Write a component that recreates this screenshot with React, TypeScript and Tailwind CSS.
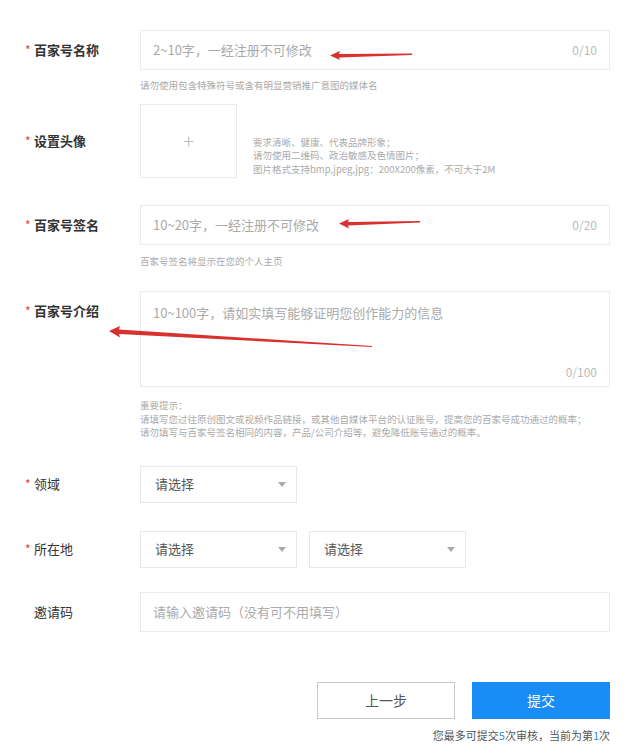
import React from 'react';

const Label = ({ text, required = true, bold = false, className = '' }: { text: string; required?: boolean; bold?: boolean; className?: string }) => (
  <div className={`w-[140px] shrink-0 pl-[25px] flex items-center text-[13px] text-[#333] ${className}`}>
    <span className="w-[9px] text-[#e0433a] text-[12px]">{required ? '*' : ''}</span>
    <span className={bold ? 'font-bold' : ''}>{text}</span>
  </div>
);

const Caret = () => (
  <svg width="8" height="5" viewBox="0 0 8 5" className="text-[#aaa]">
    <path d="M0 0 L8 0 L4 5 Z" fill="currentColor" />
  </svg>
);

const Select = () => (
  <div className="w-[157px] h-[37px] border border-[#e8e8e8] bg-white flex items-center justify-between pl-[14px] pr-[10px] text-[13px] text-[#555]">
    <span>请选择</span>
    <Caret />
  </div>
);

export default function App() {
  return (
    <div className="relative w-[640px] h-[756px] bg-white overflow-hidden" style={{ fontFamily: '"Noto Sans CJK SC", "Noto Sans", sans-serif' }}>
      <div className="flex flex-col pt-[30px]">
        {/* 名称 */}
        <div className="flex">
          <Label text="百家号名称" bold className="h-10" />
          <div className="w-[470px]">
            <div className="h-10 border border-[#ebebeb] flex items-center justify-between pl-[12px] pr-[12px] text-[13px]">
              <span className="text-[#aaa]">2~10字，一经注册不可修改</span>
              <span className="text-[#bbb] text-[12px]">0/10</span>
            </div>
            <div className="mt-[8px] text-[9.5px] text-[#aaa] leading-[14px]">请勿使用包含特殊符号或含有明显营销推广意图的媒体名</div>
          </div>
        </div>

        {/* 头像 */}
        <div className="flex mt-[12px]">
          <Label text="设置头像" bold className="h-[74px]" />
          <div className="flex items-end gap-[16px]">
            <div className="w-[97px] h-[74px] border border-[#ebebeb] flex items-center justify-center text-[#bbb] text-[20px] font-light">+</div>
            <div className="text-[9.5px] text-[#aaa] leading-[13.5px] pb-[2px]">
              <div>要求清晰、健康、代表品牌形象；</div>
              <div>请勿使用二维码、政治敏感及色情图片；</div>
              <div>图片格式支持bmp,jpeg,jpg：200X200像素，不可大于2M</div>
            </div>
          </div>
        </div>

        {/* 签名 */}
        <div className="flex mt-[27px]">
          <Label text="百家号签名" bold className="h-10" />
          <div className="w-[470px]">
            <div className="h-10 border border-[#ebebeb] flex items-center justify-between pl-[12px] pr-[12px] text-[13px]">
              <span className="text-[#aaa]">10~20字，一经注册不可修改</span>
              <span className="text-[#bbb] text-[12px]">0/20</span>
            </div>
            <div className="mt-[9px] text-[9.5px] text-[#aaa] leading-[14px]">百家号签名将显示在您的个人主页</div>
          </div>
        </div>

        {/* 介绍 */}
        <div className="flex mt-[23px] items-start">
          <Label text="百家号介绍" bold className="h-10" />
          <div className="w-[470px]">
            <div className="h-[96px] border border-[#ebebeb] flex flex-col justify-between pl-[12px] pr-[12px] pt-[11px] pb-[5px] text-[13px]">
              <span className="text-[#aaa]">10~100字，请如实填写能够证明您创作能力的信息</span>
              <span className="self-end text-[#bbb] text-[12px]">0/100</span>
            </div>
            <div className="mt-[12px] text-[9.5px] text-[#aaa] leading-[13.5px]">
              <div>重要提示：</div>
              <div>请填写您过往原创图文或视频作品链接，或其他自媒体平台的认证账号，提高您的百家号成功通过的概率；</div>
              <div>请勿填写与百家号签名相同的内容，产品/公司介绍等，避免降低账号通过的概率。</div>
            </div>
          </div>
        </div>

        {/* 领域 */}
        <div className="flex mt-[26px]">
          <Label text="领域" className="h-[37px]" />
          <Select />
        </div>

        {/* 所在地 */}
        <div className="flex mt-[28px]">
          <Label text="所在地" className="h-[37px]" />
          <div className="flex gap-[12px]">
            <Select />
            <Select />
          </div>
        </div>

        {/* 邀请码 */}
        <div className="flex mt-[24px]">
          <Label text="邀请码" required={false} className="h-10" />
          <div className="w-[470px] h-10 border border-[#ebebeb] flex items-center pl-[12px] text-[13px] text-[#aaa]">
            请输入邀请码（没有可不用填写）
          </div>
        </div>

        {/* 按钮 */}
        <div className="flex justify-end gap-[17px] pr-[30px] mt-[50px]">
          <button className="w-[138px] h-[37px] border border-[#c8c8c8] bg-white text-[14px] text-[#555]">上一步</button>
          <button className="w-[138px] h-[37px] bg-[#1a8cf5] text-[14px] text-white">提交</button>
        </div>
        <div className="flex justify-end pr-[30px] mt-[8px] text-[11px] text-[#555]">
          <span>
            您最多可提交<span className="text-[#2f8be6]">5</span>次审核，当前为第<span className="text-[#2f8be6]">1</span>次
          </span>
        </div>
      </div>

      {/* 红色箭头标注 */}
      <svg className="absolute inset-0 pointer-events-none" width="640" height="756" viewBox="0 0 640 756">
        <polygon points="330,55.5 340,51 339,54 412,53.5 412,55 339,57.5 340,60" fill="#d8322e" />
        <polygon points="339,223.5 349,219 348,222 420,221 420,222.5 348,225.5 349,228.5" fill="#d8322e" />
        <polygon points="109,331 120,326 119,329.5 372,346 372,347 119,334 120,337.5" fill="#d8322e" />
      </svg>
    </div>
  );
}
